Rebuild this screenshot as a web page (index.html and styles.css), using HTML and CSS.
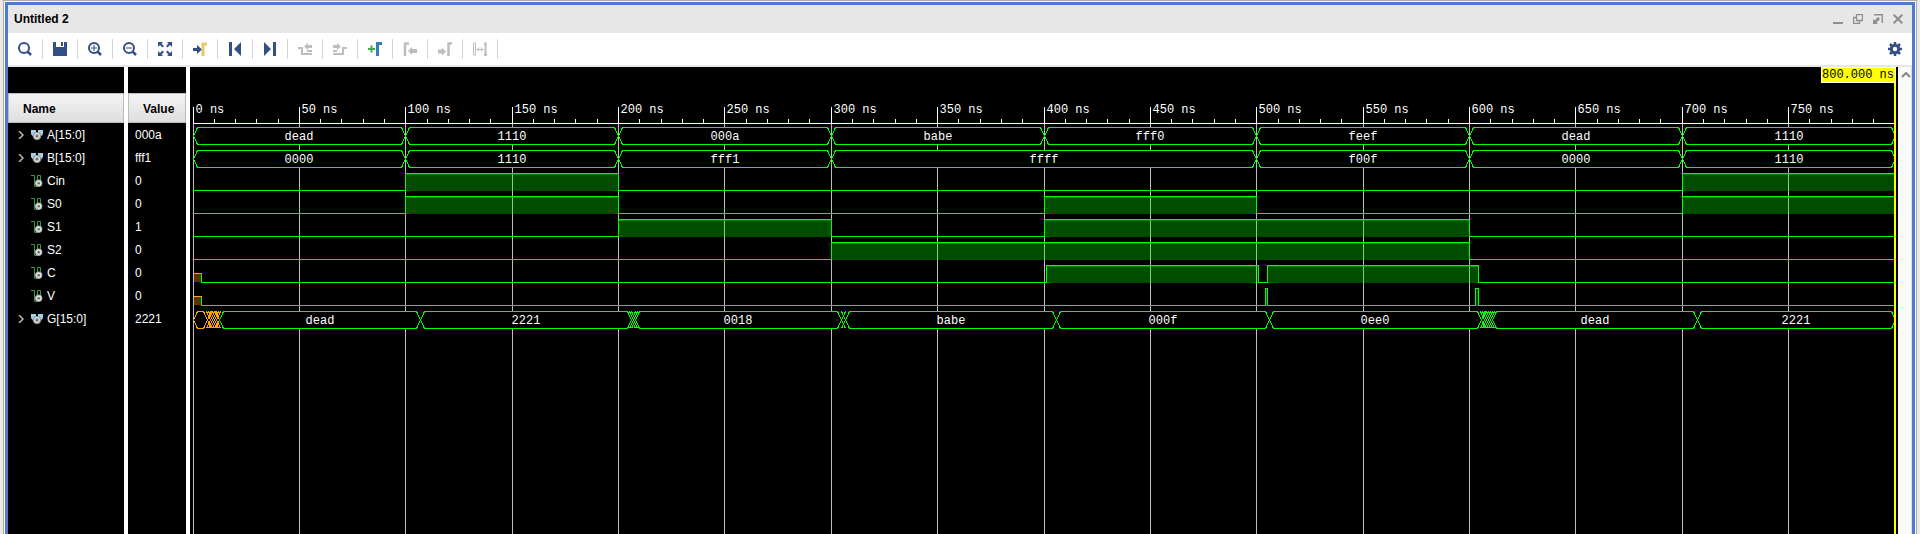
FILE: index.html
```html
<!DOCTYPE html>
<html lang="en">
<head>
<meta charset="utf-8">
<title>Untitled 2</title>
<link rel="stylesheet" href="styles.css">
</head>
<body>
<svg class="defs" aria-hidden="true">
  <symbol id="bus" viewBox="0 0 12 12">
    <path d="M0 1h5v5l-1 3H3L0 5zM7 1h5v4L9 9H8L7 6z" fill="#a3cfe6"/>
    <circle cx="6" cy="7" r="3.700" fill="#d9d9d9" stroke="#8a8a8a"/>
    <circle cx="6" cy="7" r="1.500" fill="#6b6b6b"/>
  </symbol>
  <symbol id="bit" viewBox="0 0 12 12">
    <path d="M0 .5h3.500V11M3.500 11.500h3M6.500 8V.5h3V6" fill="none" stroke="#2f9e41"/>
    <circle cx="7.700" cy="8.200" r="3.300" fill="#e2e2e2" stroke="#a8a8a8"/>
    <circle cx="7.700" cy="8.200" r="1.300" fill="#6b6b6b"/>
  </symbol>
</svg>
<div class="frame">
<main class="window">
  <header class="titlebar">
    <h1>Untitled 2</h1>
    <div class="controls">
      <button aria-label="Minimize"><svg viewBox="0 0 10 10"><path d="M0 9h10" stroke-width="2"/></svg></button>
      <button aria-label="Restore"><svg viewBox="0 0 10 10"><path d="M3.500 .5h6v6h-6zM3 3.500H.5v6h6V7" stroke-width="1.300"/></svg></button>
      <button aria-label="Float"><svg viewBox="0 0 10 10"><path d="M1 .7h8.300V9" stroke-width="1.500"/><path d="M0 10V5l1.500 1.500L5 3l2 2-3.500 3.500L5 10z" fill="#8f8f8f" stroke="none"/></svg></button>
      <button aria-label="Close"><svg viewBox="0 0 10 10"><path d="M.7.7l8.600 8.600M9.300.7L.7 9.300" stroke-width="2"/></svg></button>
    </div>
  </header>
  <nav class="toolbar" aria-label="Waveform tools">
    <button aria-label="Find"><svg viewBox="0 0 14 14"><circle cx="6" cy="6" r="5"/><path d="M9.500 9.500L13 13" stroke-width="2.500"/></svg></button>
    <button aria-label="Save"><svg viewBox="0 0 14 14"><path class="solid" d="M0 0h3v5h8V0h3v14H0zM8 0h2v4H8z"/></svg></button>
    <button aria-label="Zoom in"><svg viewBox="0 0 14 14"><circle cx="6" cy="6" r="5"/><path d="M9.500 9.500L13 13" stroke-width="2.500"/><path d="M3 6h6M6 3v6" stroke-width="1"/></svg></button>
    <button aria-label="Zoom out"><svg viewBox="0 0 14 14"><circle cx="6" cy="6" r="5"/><path d="M9.500 9.500L13 13" stroke-width="2.500"/><path d="M3 6h6" stroke-width="1"/></svg></button>
    <button aria-label="Zoom fit"><svg viewBox="0 0 14 14"><path class="solid" d="M0 0h5L3.500 1.500 6 4 4.500 5.500 2 3 0 5zM14 0v5l-2-2-2.500 2.500L8 4l2.500-2.500L9 0zM0 14V9l2 2 2.500-2.500L6 10l-2.500 2.500L5 14zM14 14H9l1.500-1.500L8 10l1.500-1.500L12 11l2-2z"/></svg></button>
    <button aria-label="Go to cursor"><svg viewBox="0 0 14 14"><path class="solid" d="M0 6h4V3l5 4.500L4 12V9H0z"/><path d="M10 14V2h4" stroke="#e3c968" stroke-width="3"/></svg></button>
    <button aria-label="Go to time 0"><svg viewBox="0 0 14 14"><path class="solid" d="M1 0h3v14H1zM13 0v14L6 7z"/></svg></button>
    <button aria-label="Go to last time"><svg viewBox="0 0 14 14"><path class="solid" d="M10 0h3v14h-3zM1 0v14l7-7z"/></svg></button>
    <button aria-label="Previous transition" disabled><svg viewBox="0 0 14 14"><path d="M0 6h4v6h10M9 9h5" stroke-width="2"/><path class="solid" d="M6 4.500L10 1v2h4v3h-4v2z"/></svg></button>
    <button aria-label="Next transition" disabled><svg viewBox="0 0 14 14"><path d="M0 12h10V6h4M0 9h4" stroke-width="2"/><path class="solid" d="M8 4.500L4 1v2H0v3h4v2z"/></svg></button>
    <button aria-label="Add marker"><svg viewBox="0 0 14 14"><path d="M0 7h7M3.500 3.500v7" stroke="#3fae49" stroke-width="2"/><path d="M9.500 14V1.500H14" stroke="#2f7fb8" stroke-width="3"/></svg></button>
    <button aria-label="Previous marker" disabled><svg viewBox="0 0 14 14"><path d="M2 14V1.500h4" stroke-width="2.500"/><path class="solid" d="M5 9l4-4v2h5v4H9v2z"/></svg></button>
    <button aria-label="Next marker" disabled><svg viewBox="0 0 14 14"><path d="M10.500 14V1.500H14" stroke-width="2.500"/><path class="solid" d="M8 9.500l-4-4v2H0v4h4v2z"/></svg></button>
    <button aria-label="Swap cursors" disabled><svg viewBox="0 0 14 14"><path d="M.5 1h2v12h-2zM4 7.500h6M6 5.500l-2 2 2 2M8 5.500l2 2-2 2" stroke-width="1"/><path d="M12.500 1v13M11 1.500h3M11 12.500h3" stroke-width="2"/></svg></button>
    <button class="settings" aria-label="Settings"><svg viewBox="0 0 14 14"><circle cx="7" cy="7" r="3.700" stroke-width="3"/><path d="M7 0v2.500M7 11.500V14M0 7h2.500M11.500 7H14M2 2l2 2M10 10l2 2M12 2l-2 2M4 10l-2 2" stroke-width="2.500"/></svg></button>
  </nav>
  <div class="viewer">
    <section class="column names">
      <h2>Name</h2>
      <ul id="names"></ul>
    </section>
    <section class="column values">
      <h2>Value</h2>
      <ul id="values"></ul>
    </section>
    <section class="wave"><svg id="wave" role="img" aria-label="Waveforms"></svg></section>
    <div class="scroll"><button aria-label="Scroll up"><svg viewBox="0 0 10 6"><path d="M1 5l4-4 4 4"/></svg></button></div>
  </div>
</main>
</div>
<script src="wave.js"></script>
</body>
</html>
```
FILE: styles.css
```css
* { box-sizing: border-box; }
body {
  margin: 0;
  height: 100vh;
  overflow: hidden;
  background: #e9e9e9;
  font: 12px/15px "Liberation Sans", Arial, sans-serif;
  color: #000;
}
button { margin: 0; padding: 0; border: 0; background: none; display: flex; align-items: center; justify-content: center; }
h1, h2, ul { margin: 0; padding: 0; font-size: 12px; }
.defs { position: absolute; width: 0; height: 0; }
.frame {
  height: 100%;
  margin: 0 3px;
  border: 1px solid #adadad;
  border-bottom: 0;
  padding: 1px 0 0;
  background: #fff;
}
.window {
  height: 100%;
  display: flex;
  flex-direction: column;
  border: 3px solid #4a7bd0;
  border-bottom: 0;
  margin: 0 1px;
}
.titlebar {
  flex: none;
  height: 28px;
  display: flex;
  align-items: center;
  justify-content: space-between;
  padding: 0 9px 0 6px;
  background: #e7e7e7;
}
.controls { display: flex; gap: 10px; }
.controls svg { width: 10px; height: 10px; fill: none; stroke: #8f8f8f; }
.toolbar {
  flex: none;
  height: 34px;
  display: flex;
  padding: 6px 0;
  border-bottom: 2px solid #e7e7e7;
  background: #fff;
}
.toolbar button { width: 35px; border-right: 1px solid #d4d4d4; color: #334f85; }
.toolbar button:disabled { color: #bdbdbd; }
.toolbar .settings { margin-left: auto; border: 0; }
.toolbar svg { width: 14px; height: 14px; fill: none; stroke: currentColor; stroke-width: 2; }
.toolbar .solid { fill: currentColor; stroke: none; }
.viewer { flex: 1; min-height: 0; display: flex; background: #000; }
.column { flex: none; padding-top: 26px; border-right: 4px solid #fff; color: #fff; }
.names { width: 120px; }
.values { width: 62px; }
.column h2 {
  height: 30px;
  padding: 8px 14px 6px;
  border: 1px solid #bcbcbc;
  background: linear-gradient(#f4f4f4, #dedede);
  color: #000;
}
.column ul { list-style: none; }
.column li { height: 23px; padding-top: 1px; display: flex; align-items: center; }
.names li { padding-left: 8px; }
.values li { padding-left: 7px; }
.names svg.kind { width: 12px; height: 12px; margin: 0 4px 0 5px; }
.twist { width: 10px; height: 12px; }
.twist svg { width: 6px; height: 8px; fill: none; stroke: #b8b8b8; stroke-width: 1.5; }
.wave { flex: 1; min-width: 0; }
.wave svg { display: block; width: 100%; height: 100%; font: 12px "Liberation Mono", "Courier New", monospace; fill: #fff; shape-rendering: crispEdges; }
.scroll { flex: none; width: 14px; padding: 5px 0 0 3px; background: #fafafa; border-right: 1px solid #d8dde6; }
.scroll svg { width: 10px; height: 6px; fill: none; stroke: #858585; stroke-width: 2; }
.grid { stroke: #bebebe; }
.axis { stroke: #fff; }
.trace { stroke: #0f0; fill: none; }
.cell { stroke: #0f0; fill: #000; }
.bar { fill: #00f000; fill-opacity: .32; }
.unknown { stroke: #ffa500; }
.unknown-fill { fill: #ffa500; fill-opacity: .32; }
.cursor { fill: #ff0; }
.flag { fill: #ff0; stroke: #fffde0; }
.flag-text { fill: #000; }
```
FILE: wave.js
```js
const END = 800;
const signals = [
  { name: "A[15:0]", value: "000a", bus: [[0, "dead"], [100, "1110"], [200, "000a"], [300, "babe"], [400, "fff0"], [500, "feef"], [600, "dead"], [700, "1110"]] },
  { name: "B[15:0]", value: "fff1", bus: [[0, "0000"], [100, "1110"], [200, "fff1"], [300, "ffff"], [500, "f00f"], [600, "0000"], [700, "1110"]] },
  { name: "Cin", value: "0", high: [[100, 200], [700, 800]] },
  { name: "S0", value: "0", high: [[100, 200], [400, 500], [700, 800]] },
  { name: "S1", value: "1", high: [[200, 300], [400, 600]] },
  { name: "S2", value: "0", high: [[300, 600]] },
  { name: "C", value: "0", unknown: 4, high: [[401, 501], [505, 604.1]] },
  { name: "V", value: "0", unknown: 4, high: [[504, 505], [603, 604.1]] },
  { name: "G[15:0]", value: "2221", unknown: 12, bus: [[0, ""], [6.7, ""], [8, ""], [9, ""], [10, ""], [11, ""], [12.3, "dead"], [107, "2221"], [206, ""], [207, ""], [208, "0018"], [305, ""], [306.5, "babe"], [406, "000f"], [506, "0ee0"], [605.6, ""], [607, ""], [608, ""], [609, ""], [610, ""], [611, "dead"], [707, "2221"]] }
];

document.getElementById("names").innerHTML = signals.map(s =>
  `<li>${s.bus
    ? `<button class="twist" aria-label="Expand ${s.name}"><svg viewBox="0 0 6 8"><path d="M1 0l4 4-4 4"/></svg></button>`
    : `<span class="twist"></span>`}<svg class="kind"><use href="#${s.bus ? "bus" : "bit"}"/></svg>${s.name}</li>`).join("");
document.getElementById("values").innerHTML = signals.map(s => `<li>${s.value}</li>`).join("");

const svg = document.getElementById("wave");

function draw() {
  const { width, height } = svg.getBoundingClientRect();
  const px = ns => Math.floor(3 + ns * (width - 6) / END) + 0.5;
  const line = (cls, d) => `<path class="${cls}" d="${d}"/>`;
  let out = "";

  for (let t = 0; t < END; t += 10) {
    const x = px(t);
    if (t % 50) {
      out += line("axis", `M${x} 52V56`);
    } else {
      out += line("grid", `M${x} 57V${height}`) + line("axis", `M${x} 40V56`);
      out += `<text x="${x + 2}" y="46">${t} ns</text>`;
    }
  }
  out += line("axis", `M3 56.5H${px(END)}`);

  signals.forEach((s, row) => {
    const top = 60.5 + row * 23;
    const low = top + 17;
    const mid = top + 8.5;
    if (s.bus) {
      s.bus.forEach(([t, label], i) => {
        const a = px(t);
        const b = px(i + 1 < s.bus.length ? s.bus[i + 1][0] : END);
        const unknown = t < (s.unknown || 0) ? " unknown" : "";
        if (b - a > 9) {
          out += line("cell" + unknown, `M${a} ${mid}L${a + 4} ${top}H${b - 4}L${b} ${mid}L${b - 4} ${low}H${a + 4}Z`);
        } else {
          out += line("trace" + unknown, `M${a - 4} ${top}L${a + 4} ${low}M${a - 4} ${low}L${a + 4} ${top}M${b - 4} ${top}L${b + 4} ${low}M${b - 4} ${low}L${b + 4} ${top}`);
        }
        if (label) {
          out += `<text x="${Math.floor((a + b) / 2)}" y="${top + 12.5}" text-anchor="middle">${label}</text>`;
        }
      });
      return;
    }
    let path = "";
    let x = px(0);
    if (s.unknown) {
      const u = px(s.unknown);
      out += `<rect class="unknown-fill" x="${x}" y="${mid}" width="${u - x}" height="8"/>`;
      out += line("trace unknown", `M${x} ${top + 8}H${u}`);
      path += `M${u} ${top + 8}V${low}`;
      x = u;
    }
    s.high.forEach(([from, to]) => {
      const a = px(from);
      const b = px(to);
      out += `<rect class="bar" x="${a}" y="${top + 0.5}" width="${b - a}" height="17"/>`;
      if (b - a > 9) {
        out += `<rect class="bar" x="${a + 0.5}" y="${top + 0.5}" width="${b - a - 1}" height="1"/>`;
      }
      path += `M${x - 0.5} ${low}H${a}V${top}H${b}V${low}`;
      x = b;
    });
    if (x < px(END)) path += `M${x} ${low}H${px(END)}`;
    out += line("trace", path);
  });

  const end = px(END) + 0.5;
  out += `<rect class="cursor" x="${end - 2}" y="0" width="2" height="${height}"/>`;
  out += `<rect class="flag" x="${end - 74.5}" y="0.5" width="74" height="15"/>`;
  out += `<text class="flag-text" x="${end - 2}" y="11" text-anchor="end">800.000 ns</text>`;
  svg.innerHTML = out;
}

draw();
window.addEventListener("resize", draw);
```
